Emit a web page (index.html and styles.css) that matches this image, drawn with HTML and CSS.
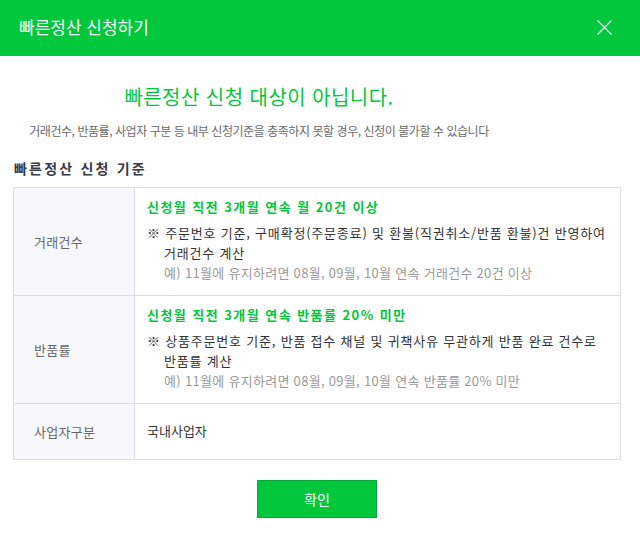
FILE: index.html
```html
<!DOCTYPE html>
<html lang="ko">
<head>
<meta charset="utf-8">
<title>빠른정산 신청하기</title>
<link rel="stylesheet" href="styles.css">
</head>
<body>
<div class="modal">
  <header class="modal-header">
    <h1 class="modal-title">빠른정산 신청하기</h1>
    <button class="close-btn" type="button" aria-label="닫기">
      <svg width="15" height="15" viewBox="0 0 15 15"><path d="M0.5 0.5L14.5 14.5M14.5 0.5L0.5 14.5" stroke="#ffffff" stroke-width="1.1" fill="none"/></svg>
    </button>
  </header>
  <div class="modal-body">
    <div class="intro">
      <h2 class="intro-title">빠른정산 신청 대상이 아닙니다.</h2>
      <p class="intro-desc">거래건수, 반품률, 사업자 구분 등 내부 신청기준을 충족하지 못할 경우, 신청이 불가할 수 있습니다</p>
    </div>
    <h3 class="section-title">빠른정산 신청 기준</h3>
    <div class="criteria">
      <div class="cell label row-1">거래건수</div>
      <div class="cell content row-1">
        <p class="crit-title">신청월 직전 3개월 연속 월 20건 이상</p>
        <p class="note">※ 주문번호 기준, 구매확정(주문종료) 및 환불(직권취소/반품 환불)건 반영하여<br>거래건수 계산</p>
        <p class="example">예) 11월에 유지하려면 08월, 09월, 10월 연속 거래건수 20건 이상</p>
      </div>
      <div class="cell label row-2">반품률</div>
      <div class="cell content row-2">
        <p class="crit-title">신청월 직전 3개월 연속 반품률 20% 미만</p>
        <p class="note">※ 상품주문번호 기준, 반품 접수 채널 및 귀책사유 무관하게 반품 완료 건수로<br>반품률 계산</p>
        <p class="example">예) 11월에 유지하려면 08월, 09월, 10월 연속 반품률 20% 미만</p>
      </div>
      <div class="cell label row-3">사업자구분</div>
      <div class="cell content row-3 plain">국내사업자</div>
    </div>
    <div class="actions">
      <button class="confirm-btn" type="button">확인</button>
    </div>
  </div>
</div>
</body>
</html>
```

FILE: styles.css
```css
* { box-sizing: border-box; }
html, body { margin: 0; padding: 0; background: #ffffff; }
body {
  font-family: "Noto Sans CJK KR", "Noto Sans", "Liberation Sans", sans-serif;
  color: #333333;
  width: 640px;
}
.modal { display: flex; flex-direction: column; }
.modal-header {
  height: 56px;
  background: #00c73c;
  display: flex;
  align-items: center;
  justify-content: space-between;
  padding: 0 28px 0 19px;
}
.modal-title {
  margin: 0;
  font-size: 17px;
  font-weight: normal;
  color: #ffffff;
  line-height: 24px;
  letter-spacing: 0;
  padding-bottom: 3px;
}
.close-btn {
  border: 0;
  background: none;
  padding: 0;
  width: 15px;
  height: 15px;
  display: block;
  margin-bottom: 1px;
}
.close-btn svg { display: block; }
.modal-body { display: flex; flex-direction: column; }
.intro {
  width: 494px;
  margin-left: 12px;
  text-align: center;
}
.intro-title {
  margin: 29px 0 0;
  font-size: 20px;
  line-height: 24px;
  font-weight: normal;
  color: #00c73c;
  letter-spacing: 0.45px;
}
.intro-desc {
  margin: 14px 0 0;
  font-size: 12px;
  line-height: 16px;
  color: #6a6a6a;
  letter-spacing: -0.45px;
}
.section-title {
  margin: 20px 0 0 14px;
  font-size: 14px;
  line-height: 18px;
  font-weight: bold;
  color: #3a3a48;
  letter-spacing: 2.2px;
}
.criteria {
  margin: 10px 0 0 13px;
  width: 608px;
  display: grid;
  grid-template-columns: 121px 486px;
  border-top: 1px solid #dcdce4;
  border-left: 1px solid #dcdce4;
}
.cell {
  border-right: 1px solid #dcdce4;
  border-bottom: 1px solid #dcdce4;
  font-size: 13px;
  line-height: 20px;
}
.label {
  background: #f7f8fc;
  color: #666666;
  padding-left: 20px;
  display: flex;
  align-items: center;
  letter-spacing: 0.3px;
}
.content {
  padding: 11px 8px 12px 12px;
  color: #333333;
}
.content.plain { padding: 17px 12px 18px; }
.content p { margin: 0; }
.crit-title {
  font-weight: bold;
  color: #00c73c;
  line-height: 16px;
  margin-bottom: 8px !important;
  letter-spacing: 1.45px;
}
.note {
  padding-left: 17px;
  text-indent: -17px;
  letter-spacing: 0.8px;
  white-space: nowrap;
}
.example {
  padding-left: 17px;
  color: #999999;
  letter-spacing: 0.3px;
  white-space: nowrap;
}
.actions {
  margin: 20px 0 0 13px;
  width: 608px;
  display: flex;
  justify-content: center;
}
.confirm-btn {
  width: 120px;
  height: 38px;
  background: #00c73c;
  border: 1px solid #08a93b;
  color: #ffffff;
  font-family: inherit;
  font-size: 14px;
  padding: 0;
}
```
